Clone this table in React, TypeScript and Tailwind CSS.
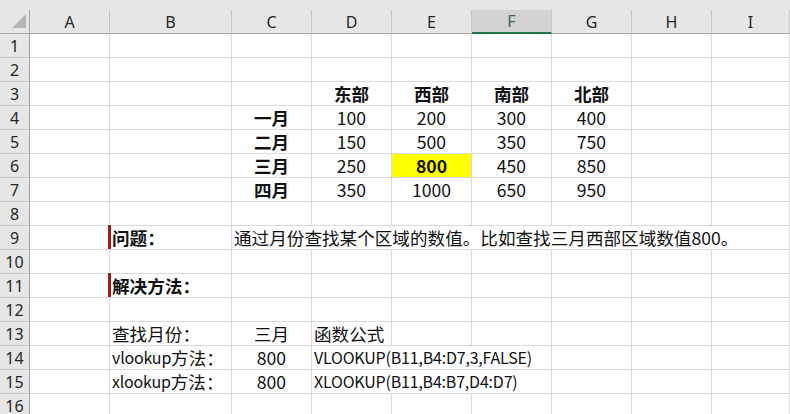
import React from "react";

type Cell = {
  t?: React.ReactNode;
  span?: number;
  align?: "left" | "center";
  bold?: boolean;
  fill?: string;
  bar?: boolean;
  latin?: boolean;
};

const E: Cell = {};
const empties = (n: number): Cell[] => Array.from({ length: n }, () => ({}));

const cols = ["A", "B", "C", "D", "E", "F", "G", "H", "I"];

const num = (t: string, extra: Partial<Cell> = {}): Cell => ({ t, align: "center", ...extra });

const L = ({ children }: { children: React.ReactNode }) => (
  <span className="text-[16px] tracking-[-0.2px]">{children}</span>
);

const rows: Cell[][] = [
  empties(9),
  empties(9),
  [E, E, E, num("东部", { bold: true }), num("西部", { bold: true }), num("南部", { bold: true }), num("北部", { bold: true }), E, E],
  [E, E, num("一月", { bold: true }), num("100"), num("200"), num("300"), num("400"), E, E],
  [E, E, num("二月", { bold: true }), num("150"), num("500"), num("350"), num("750"), E, E],
  [E, E, num("三月", { bold: true }), num("250"), num("800", { bold: true, fill: "yellow" }), num("450"), num("850"), E, E],
  [E, E, num("四月", { bold: true }), num("350"), num("1000"), num("650"), num("950"), E, E],
  empties(9),
  [E, { t: "问题：", bold: true, bar: true }, { t: "通过月份查找某个区域的数值。比如查找三月西部区域数值800。", span: 7 }],
  empties(9),
  [E, { t: "解决方法：", bold: true, bar: true }, ...empties(7)],
  empties(9),
  [E, { t: "查找月份：" }, num("三月"), { t: "函数公式" }, ...empties(5)],
  [E, { t: <><L>vlookup</L>方法：</> }, num("800"), { t: <L>VLOOKUP(B11,B4:D7,3,FALSE)</L>, span: 3 }, E, E, E],
  [E, { t: <><L>xlookup</L>方法：</> }, num("800"), { t: <L>XLOOKUP(B11,B4:B7,D4:D7)</L>, span: 3 }, E, E, E],
  empties(9),
];

const spanCls: Record<number, string> = {
  1: "col-span-1",
  3: "col-span-3",
  7: "col-span-7",
};

export default function App() {
  return (
    <div
      className="w-[790px] h-[414px] overflow-hidden bg-white"
      style={{ fontFamily: '"Noto Sans CJK SC", "Noto Sans", sans-serif' }}
    >
      <div className="h-[10px] bg-[#e6e6e6]" />
      <div className="grid grid-cols-[30px_80px_122px_80px_80px_80px_80px_80px_80px_1fr] auto-rows-[24px]">
        <div className="relative bg-[#e6e6e6] border-r border-b border-[#a6a6a6]">
          <svg className="absolute left-[12px] top-[4px]" width="15" height="15" viewBox="0 0 15 15">
            <polygon points="14,0 14,14 0,14" fill="#b5b5b5" />
          </svg>
        </div>
        {cols.map((c) => {
          const sel = c === "F";
          return (
            <div
              key={c}
              className={
                sel
                  ? "flex items-center justify-center bg-[#d3d3d3] border-r border-r-[#c6c6c6] border-b-2 border-b-[#217346] text-[16px] text-[#3a6a50]"
                  : "flex items-center justify-center bg-[#e6e6e6] border-r border-r-[#c6c6c6] border-b border-b-[#a6a6a6] text-[16px] text-[#262626]"
              }
              style={{ fontFamily: '"Noto Sans", sans-serif' }}
            >
              {c}
            </div>
          );
        })}

        {rows.map((row, ri) => (
          <React.Fragment key={ri}>
            <div
              className="flex items-center justify-center bg-[#e6e6e6] border-r border-r-[#a6a6a6] border-b border-b-[#c8c8c8] text-[16px] text-[#262626]"
              style={{ fontFamily: '"Noto Sans", sans-serif' }}
            >
              {ri + 1}
            </div>
            {row.map((cell, ci) => {
              const span = cell.span ?? 1;
              const base =
                "relative flex items-center whitespace-nowrap border-r border-b border-[#d9d9d9] text-[17.6px] leading-[23px] text-[#111]";
              const align = cell.align === "center" ? " justify-center" : " pl-[2px]";
              const weight = cell.bold ? " font-bold" : "";
              const fill = cell.fill === "yellow" ? " bg-[#ffff00]" : "";
              return (
                <div key={ci} className={base + " " + (spanCls[span] || "") + align + weight + fill}>
                  {cell.bar && (
                    <span className="absolute left-[-2px] top-[-1px] bottom-0 w-[3px] bg-[#9b1c1c]" />
                  )}
                  {cell.t}
                </div>
              );
            })}
          </React.Fragment>
        ))}
      </div>
    </div>
  );
}
